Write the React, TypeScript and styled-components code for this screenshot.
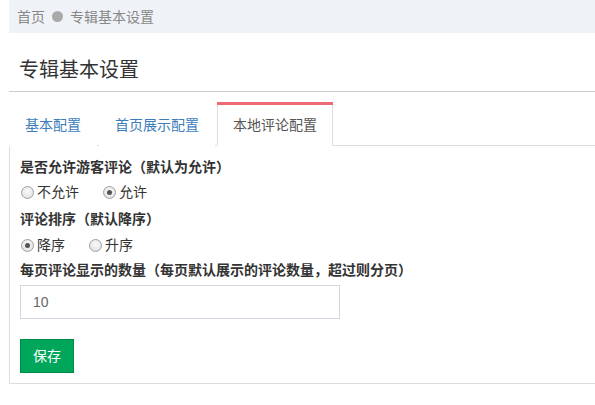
import React, { useState } from "react";
import styled, { createGlobalStyle } from "styled-components";

const Global = createGlobalStyle`
  html, body { margin: 0; padding: 0; background: #fff; }
  body {
    font-family: "Liberation Sans", "Noto Sans CJK SC", sans-serif;
    font-size: 14px;
    color: #333;
    overflow: hidden;
    text-spacing-trim: space-all;
    font-feature-settings: "chws" 0, "halt" 0, "palt" 0;
  }
  * { box-sizing: border-box; }
`;

const Page = styled.div`
  padding-left: 9px;
  width: 595px;
`;

const Breadcrumb = styled.div`
  height: 33px;
  background: #eff3f7;
  display: flex;
  align-items: center;
  padding-left: 8px;
  font-size: 14px;
  color: #888;
`;

const Crumb = styled.span`
  line-height: 20px;
`;

const Dot = styled.span`
  display: inline-block;
  flex: none;
  width: 11px;
  height: 11px;
  border-radius: 50%;
  background: #a9a9a9;
  margin: 0 7px 0 7px;
`;

const Header = styled.div`
  padding: 23px 0 7px 10px;
  border-bottom: 1px solid #cccccc;
`;

const Title = styled.h1`
  margin: 0;
  font-size: 20px;
  font-weight: 400;
  line-height: 28px;
  color: #333;
`;

const TabList = styled.ul`
  list-style: none;
  margin: 10px 0 0;
  padding: 0;
  display: flex;
  border-bottom: 1px solid #dddddd;
`;

const TabItem = styled.li<{ $active?: boolean }>`
  margin-right: 2px;
  margin-bottom: -1px;
  border-top: 3px solid ${(p) => (p.$active ? "#ee6b75" : "transparent")};
`;

const TabLink = styled.a<{ $active?: boolean }>`
  display: block;
  padding: 10px 15px;
  line-height: 20px;
  font-size: 14px;
  cursor: pointer;
  text-decoration: none;
  color: ${(p) => (p.$active ? "#555" : "#3c7dbd")};
  background: #fff;
  border: 1px solid transparent;
  border-top: none;
  border-left-color: ${(p) => (p.$active ? "#dddddd" : "transparent")};
  border-right-color: ${(p) => (p.$active ? "#dddddd" : "transparent")};
`;

const Panel = styled.div`
  border-left: 1px solid #dddddd;
  border-bottom: 1px solid #dddddd;
  padding: 11px 10px 10px 10px;
`;

const FieldLabel = styled.div<{ $gap: number }>`
  margin-top: ${(p) => p.$gap}px;
  font-size: 14px;
  font-weight: 700;
  line-height: 20px;
  color: #333;
  white-space: nowrap;
`;

const RadioRow = styled.div<{ $gap: number }>`
  margin-top: ${(p) => p.$gap}px;
  height: 20px;
  display: flex;
  align-items: center;
`;

const RadioLabel = styled.label`
  display: inline-flex;
  align-items: center;
  margin-right: 23px;
  font-size: 14px;
  line-height: 20px;
  color: #333;
  cursor: pointer;
`;

const Radio = styled.input.attrs({ type: "radio" })`
  appearance: none;
  width: 13px;
  height: 13px;
  margin: 0 3px 0 1px;
  border-radius: 50%;
  border: 1px solid #a0a0a0;
  background: radial-gradient(circle at 50% 40%, #fafafa 0%, #dcdcdc 100%);
  position: relative;
  cursor: pointer;
  &:checked::after {
    content: "";
    position: absolute;
    left: 3px;
    top: 3px;
    width: 5px;
    height: 5px;
    border-radius: 50%;
    background: #555;
  }
`;

const TextInput = styled.input`
  display: block;
  margin-top: 5px;
  width: 320px;
  height: 34px;
  padding: 6px 12px;
  border: 1px solid #d2d6de;
  font-family: inherit;
  font-size: 14px;
  color: #666;
  outline: none;
`;

const SaveButton = styled.button`
  display: block;
  margin-top: 20px;
  height: 34px;
  padding: 6px 12px;
  background: #00a65a;
  border: 1px solid #008d4c;
  color: #fff;
  font-family: inherit;
  font-size: 14px;
  line-height: 20px;
  cursor: pointer;
`;

const tabs = ["基本配置", "首页展示配置", "本地评论配置"];

export default function App() {
  const [guest, setGuest] = useState("allow");
  const [order, setOrder] = useState("desc");
  const [count, setCount] = useState("10");
  const active = 2;

  return (
    <Page>
      <Global />
      <Breadcrumb>
        <Crumb>首页</Crumb>
        <Dot />
        <Crumb>专辑基本设置</Crumb>
      </Breadcrumb>
      <Header>
        <Title>专辑基本设置</Title>
      </Header>
      <TabList>
        {tabs.map((t, i) => (
          <TabItem key={t} $active={i === active}>
            <TabLink $active={i === active}>{t}</TabLink>
          </TabItem>
        ))}
      </TabList>
      <Panel>
        <FieldLabel $gap={0}>是否允许游客评论（默认为允许）</FieldLabel>
        <RadioRow $gap={5}>
          <RadioLabel>
            <Radio name="guest" checked={guest === "deny"} onChange={() => setGuest("deny")} />
            不允许
          </RadioLabel>
          <RadioLabel>
            <Radio name="guest" checked={guest === "allow"} onChange={() => setGuest("allow")} />
            允许
          </RadioLabel>
        </RadioRow>
        <FieldLabel $gap={7}>评论排序（默认降序）</FieldLabel>
        <RadioRow $gap={6}>
          <RadioLabel>
            <Radio name="order" checked={order === "desc"} onChange={() => setOrder("desc")} />
            降序
          </RadioLabel>
          <RadioLabel>
            <Radio name="order" checked={order === "asc"} onChange={() => setOrder("asc")} />
            升序
          </RadioLabel>
        </RadioRow>
        <FieldLabel $gap={5}>每页评论显示的数量（每页默认展示的评论数量，超过则分页）</FieldLabel>
        <TextInput value={count} onChange={(e) => setCount(e.target.value)} />
        <SaveButton>保存</SaveButton>
      </Panel>
    </Page>
  );
}
